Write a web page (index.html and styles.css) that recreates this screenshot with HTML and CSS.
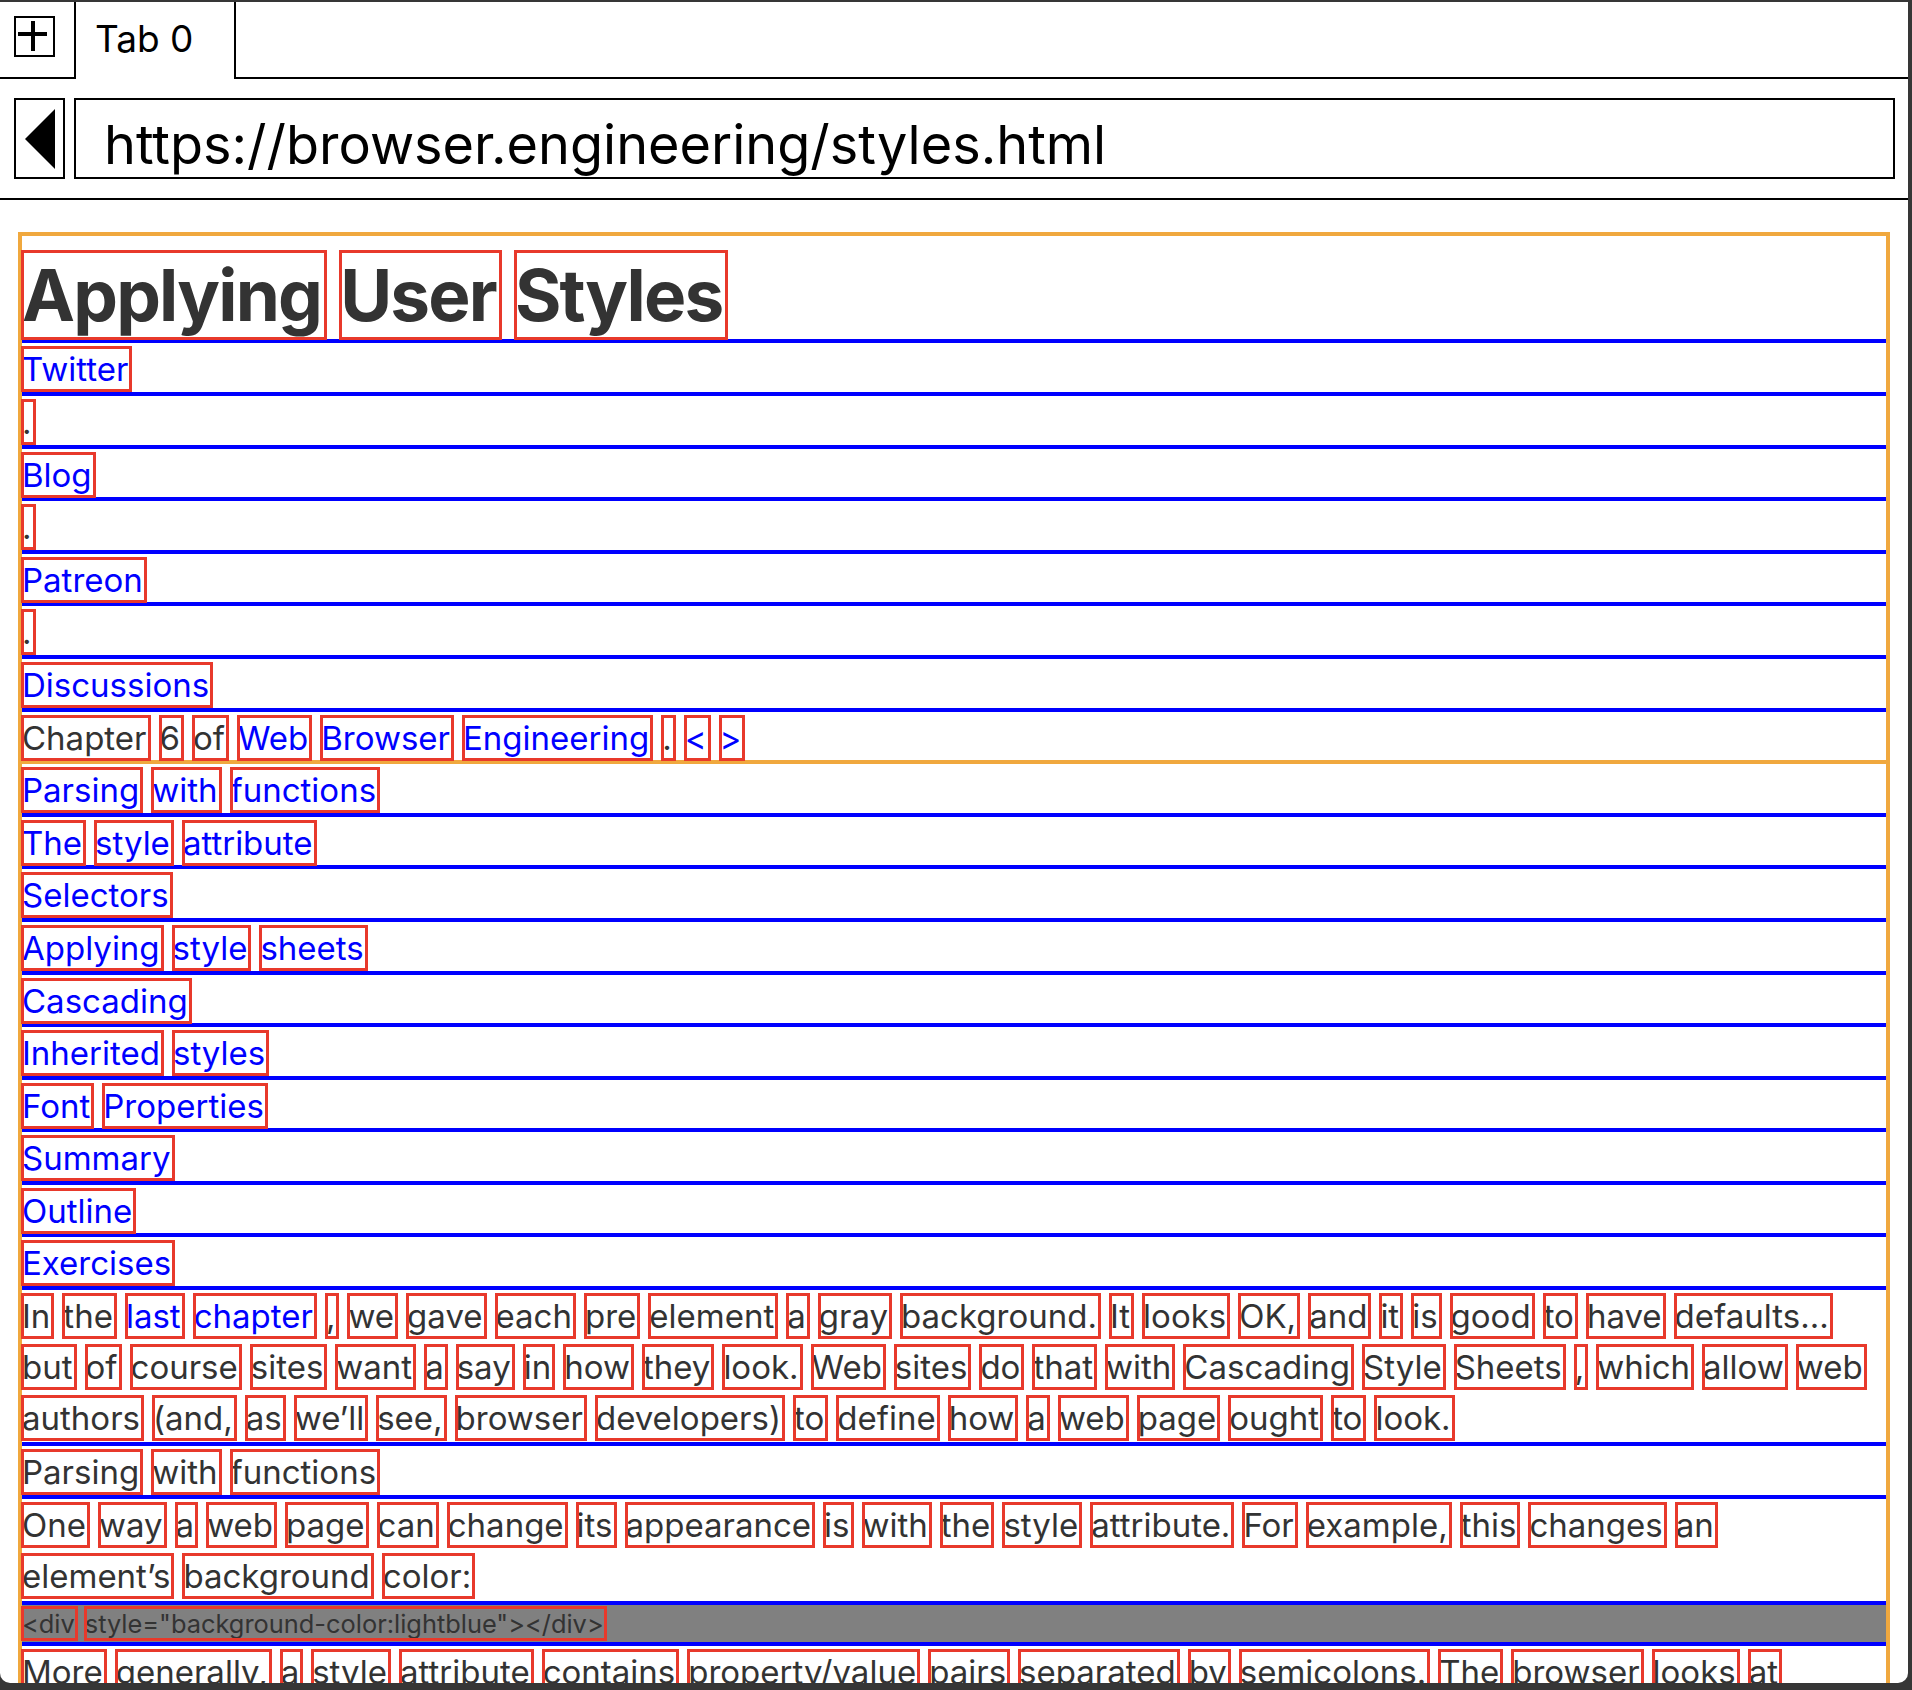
FILE: index.html
```html
<!DOCTYPE html>
<html>
<head>
<meta charset="utf-8">
<title>Browser</title>
<link rel="stylesheet" href="styles.css">
</head>
<body>
<div class="window">
  <div class="tabbar">
    <div class="tabbar-left">
      <svg class="newtab" width="41" height="41" viewBox="0 0 41 41">
        <rect x="1" y="1" width="39" height="39" fill="none" stroke="#000" stroke-width="2"/>
        <rect x="4" y="16" width="29" height="4" fill="#000"/>
        <rect x="17" y="5" width="4" height="30" fill="#000"/>
      </svg>
    </div>
    <div class="tab">Tab 0</div>
    <div class="tabbar-rest"></div>
  </div>
  <div class="addressbar">
    <div class="back">
      <svg width="51" height="81" viewBox="0 0 51 81">
        <rect x="1" y="1" width="49" height="79" fill="none" stroke="#000" stroke-width="2"/>
        <polygon points="11,41 41,11 41,71" fill="#000"/>
      </svg>
    </div>
    <div class="url">https://browser.engineering/styles.html</div>
  </div>
  <div class="viewport">
    <div class="page">
      <div class="header">
        <div class="row h1"><span class="w">Applying</span><span class="w">User</span><span class="w">Styles</span></div>
        <div class="row"><span class="w a">Twitter</span></div>
        <div class="row"><span class="w">.</span></div>
        <div class="row"><span class="w a">Blog</span></div>
        <div class="row"><span class="w">.</span></div>
        <div class="row"><span class="w a">Patreon</span></div>
        <div class="row"><span class="w">.</span></div>
        <div class="row"><span class="w a">Discussions</span></div>
        <div class="row last"><span class="w">Chapter</span><span class="w">6</span><span class="w">of</span><span class="w a">Web</span><span class="w a">Browser</span><span class="w a">Engineering</span><span class="w">.</span><span class="w a">&lt;</span><span class="w a">&gt;</span></div>
      </div>
      <div class="row"><span class="w a">Parsing</span><span class="w a">with</span><span class="w a">functions</span></div>
      <div class="row"><span class="w a">The</span><span class="w a">style</span><span class="w a">attribute</span></div>
      <div class="row"><span class="w a">Selectors</span></div>
      <div class="row"><span class="w a">Applying</span><span class="w a">style</span><span class="w a">sheets</span></div>
      <div class="row"><span class="w a">Cascading</span></div>
      <div class="row"><span class="w a">Inherited</span><span class="w a">styles</span></div>
      <div class="row"><span class="w a">Font</span><span class="w a">Properties</span></div>
      <div class="row"><span class="w a">Summary</span></div>
      <div class="row"><span class="w a">Outline</span></div>
      <div class="row"><span class="w a">Exercises</span></div>
      <div class="para">
        <div class="line"><span class="w">In</span><span class="w">the</span><span class="w a">last</span><span class="w a">chapter</span><span class="w">,</span><span class="w">we</span><span class="w">gave</span><span class="w">each</span><span class="w">pre</span><span class="w">element</span><span class="w">a</span><span class="w">gray</span><span class="w">background.</span><span class="w">It</span><span class="w">looks</span><span class="w">OK,</span><span class="w">and</span><span class="w">it</span><span class="w">is</span><span class="w">good</span><span class="w">to</span><span class="w">have</span><span class="w">defaults…</span></div>
        <div class="line"><span class="w">but</span><span class="w">of</span><span class="w">course</span><span class="w">sites</span><span class="w">want</span><span class="w">a</span><span class="w">say</span><span class="w">in</span><span class="w">how</span><span class="w">they</span><span class="w">look.</span><span class="w">Web</span><span class="w">sites</span><span class="w">do</span><span class="w">that</span><span class="w">with</span><span class="w">Cascading</span><span class="w">Style</span><span class="w">Sheets</span><span class="w">,</span><span class="w">which</span><span class="w">allow</span><span class="w">web</span></div>
        <div class="line"><span class="w">authors</span><span class="w">(and,</span><span class="w">as</span><span class="w">we’ll</span><span class="w">see,</span><span class="w">browser</span><span class="w">developers)</span><span class="w">to</span><span class="w">define</span><span class="w">how</span><span class="w">a</span><span class="w">web</span><span class="w">page</span><span class="w">ought</span><span class="w">to</span><span class="w">look.</span></div>
      </div>
      <div class="row"><span class="w">Parsing</span><span class="w">with</span><span class="w">functions</span></div>
      <div class="para">
        <div class="line"><span class="w">One</span><span class="w">way</span><span class="w">a</span><span class="w">web</span><span class="w">page</span><span class="w">can</span><span class="w">change</span><span class="w">its</span><span class="w">appearance</span><span class="w">is</span><span class="w">with</span><span class="w">the</span><span class="w">style</span><span class="w">attribute.</span><span class="w">For</span><span class="w">example,</span><span class="w">this</span><span class="w">changes</span><span class="w">an</span></div>
        <div class="line"><span class="w">element’s</span><span class="w">background</span><span class="w">color:</span></div>
      </div>
      <div class="pre"><span class="w">&lt;div</span><span class="w">style="background-color:lightblue"&gt;&lt;/div&gt;</span></div>
      <div class="para open">
        <div class="line"><span class="w">More</span><span class="w">generally,</span><span class="w">a</span><span class="w">style</span><span class="w">attribute</span><span class="w">contains</span><span class="w">property/value</span><span class="w">pairs</span><span class="w">separated</span><span class="w">by</span><span class="w">semicolons.</span><span class="w">The</span><span class="w">browser</span><span class="w">looks</span><span class="w">at</span></div>
        <div class="line"><span class="w">each</span><span class="w">property/value</span><span class="w">pair</span><span class="w">and</span><span class="w">applies</span><span class="w">it</span></div>
      </div>
    </div>
  </div>
</div>
</body>
</html>
```

FILE: styles.css
```css
html, body {
  margin: 0;
  padding: 0;
  background: #363636;
}

body {
  width: 1912px;
  height: 1690px;
  overflow: hidden;
  font-family: Inter, "Liberation Sans", sans-serif;
  color: #000;
}

.window {
  width: 1908px;
  height: 1681px;
  margin-top: 2px;
  background: #fff;
  overflow: hidden;
  border-radius: 0 0 10px 10px;
}

/* ---- tab bar ---- */
.tabbar {
  display: flex;
  height: 75px;
}

.tabbar-left {
  width: 74px;
  border-bottom: 2px solid #000;
  padding: 14px 0 0 14px;
  box-sizing: border-box;
  height: 77px;
}

.newtab {
  display: block;
}

.tab {
  width: 162px;
  height: 77px;
  box-sizing: border-box;
  border-left: 2px solid #000;
  border-right: 2px solid #000;
  padding: 14px 0 0 19px;
  font-size: 37px;
  line-height: 45px;
  color: #000;
}

.tabbar-rest {
  flex: 1;
  height: 77px;
  box-sizing: border-box;
  border-bottom: 2px solid #000;
}

/* ---- address bar ---- */
.addressbar {
  display: flex;
  height: 121px;
  box-sizing: border-box;
  padding: 19px 13px 0 14px;
  border-bottom: 2px solid #000;
  margin-top: 2px;
}

.back svg {
  display: block;
}

.url {
  flex: 1;
  margin-left: 9px;
  height: 81px;
  box-sizing: border-box;
  border: 2px solid #000;
  padding: 12px 0 0 28px;
  font-size: 54px;
  line-height: 66px;
  color: #000;
  white-space: nowrap;
}

/* ---- viewport ---- */
.viewport {
  padding: 32px 18px 0 18px;
}

.page {
  border: 4px solid #f0a83e;
  border-bottom: none;
  height: 1600px;
}

.header {
  border-bottom: 4px solid #f0a83e;
}

.row {
  display: flex;
  gap: 10px;
  height: 52.6px;
  box-sizing: border-box;
  padding-top: 4px;
  border-bottom: 4px solid #0000ff;
}

.row.last {
  border-bottom: none;
  height: 48.6px;
}

.row.h1 {
  height: 107.4px;
  padding-top: 15px;
  gap: 14px;
}

.w {
  display: inline-block;
  height: 44px;
  line-height: 45px;
  font-size: 33px;
  color: #333;
  padding-right: 3px;
  white-space: nowrap;
  outline: 3px solid #e8392b;
  outline-offset: -2px;
}

.w.a {
  color: #0000ff;
}

.h1 .w {
  height: 88px;
  line-height: 89px;
  font-size: 71px;
  font-weight: 700;
  letter-spacing: -1.8px;
  padding-right: 5px;
}

.para {
  border-bottom: 4px solid #0000ff;
}

.para.open {
  border-bottom: none;
}

.line {
  display: flex;
  gap: 10px;
  height: 50.8px;
  box-sizing: border-box;
  padding-top: 4px;
}

.pre {
  display: flex;
  gap: 8px;
  height: 41px;
  box-sizing: border-box;
  padding-top: 2px;
  background: #808080;
  border-bottom: 4px solid #0000ff;
}

.pre .w {
  height: 33px;
  line-height: 33px;
  font-size: 25.4px;
  padding-right: 2px;
}
```
